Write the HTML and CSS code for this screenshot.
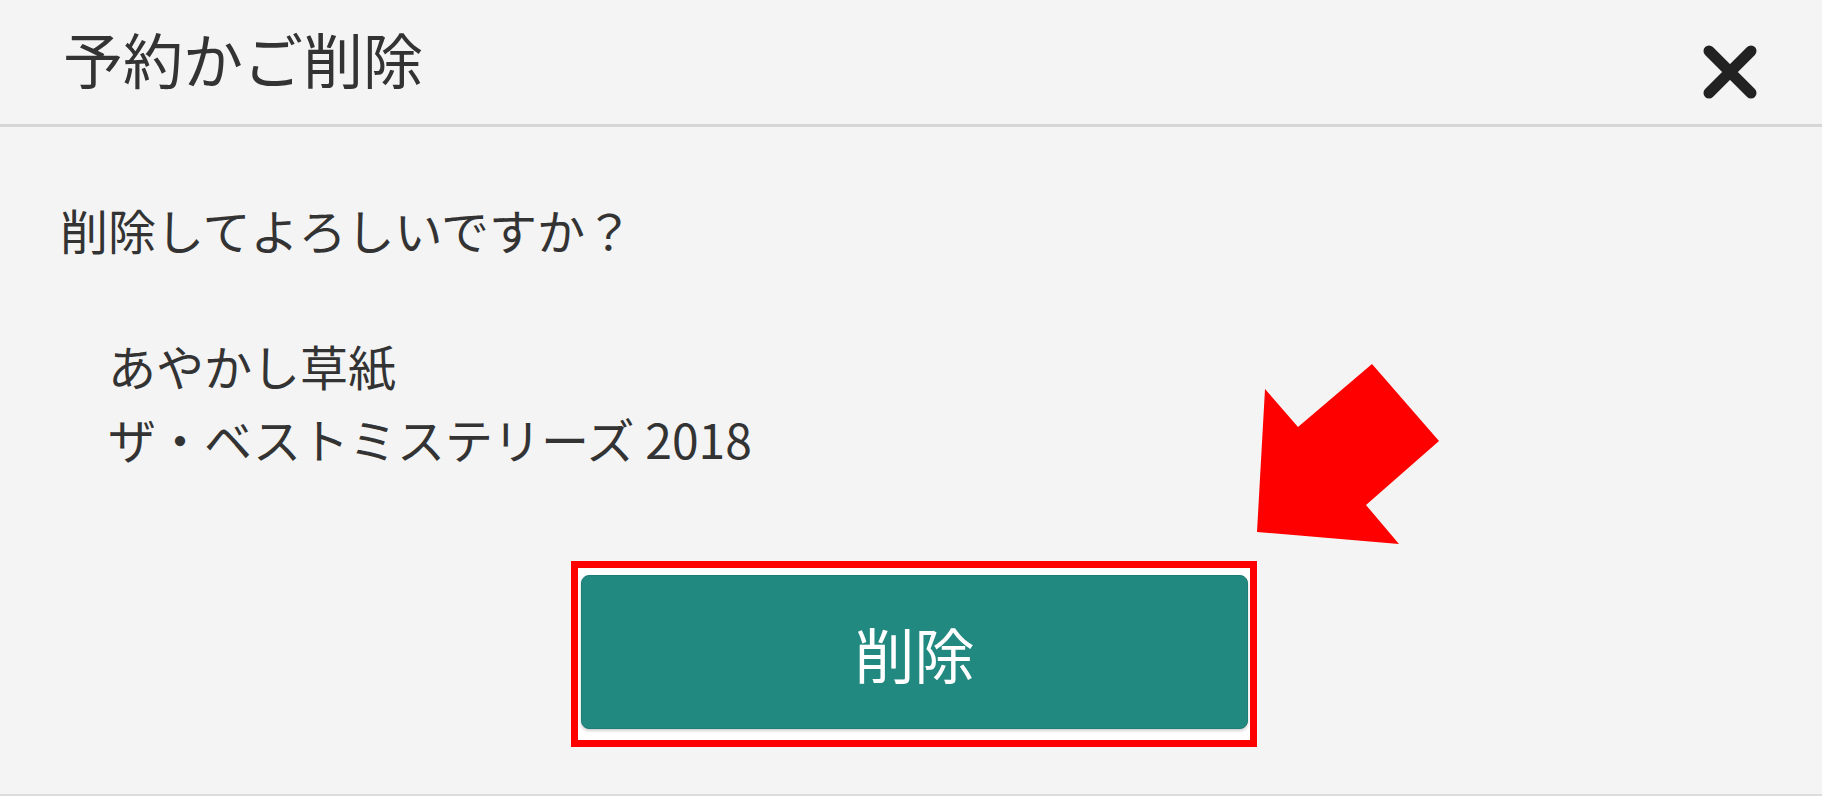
FILE: index.html
```html
<!DOCTYPE html>
<html lang="ja">
<head>
    <meta charset="UTF-8">
    <meta name="viewport" content="width=device-width, initial-scale=1.0">
    <title>予約かご削除</title>
    <link rel="stylesheet" href="styles.css">
</head>
<body>
    <div class="modal">
        <div class="modal-header">
            <h1 class="modal-title">予約かご削除</h1>
            <button type="button" class="btn-close" aria-label="閉じる">
                <svg width="54" height="54" viewBox="0 0 54 54">
                    <path d="M6 6 L48 48 M48 6 L6 48" stroke="#222" stroke-width="11" stroke-linecap="round" fill="none"/>
                </svg>
            </button>
        </div>
        <div class="modal-body">
            <p class="message">削除してよろしいですか？</p>
            <ul class="book-list">
                <li>あやかし草紙</li>
                <li>ザ・ベストミステリーズ 2018</li>
            </ul>
        </div>
        <div class="modal-footer">
            <div class="highlight">
                <button type="button" class="btn-delete">削除</button>
            </div>
        </div>
    </div>

    <svg class="arrow" width="200" height="190" viewBox="0 0 200 190">
        <polygon points="7,172 149,184 116,145 189,81 122,4 48,67 15,29" fill="#ff0000"/>
    </svg>
</body>
</html>
```

FILE: styles.css
```css
body {
    margin: 0;
    background-color: #f4f4f4;
    color: #333333;
    font-family: "Noto Sans CJK JP", "Noto Sans", sans-serif;
}
.modal {
    height: 794px;
    border-bottom: 2px solid #dddddd;
}
.modal-header {
    height: 124px;
    display: flex;
    align-items: center;
    justify-content: space-between;
    padding: 0 65px 0 63px;
    border-bottom: 3px solid #d6d6d6;
}
.modal-title {
    margin: 0 0 8px 0;
    font-size: 60px;
    font-weight: normal;
    line-height: 1;
}
.btn-close {
    background: none;
    border: none;
    padding: 0;
    margin-top: 20px;
    width: 54px;
    height: 54px;
    display: flex;
}
.modal-body {
    padding: 66px 0 0 60px;
}
.message {
    margin: 0;
    font-size: 48px;
    line-height: 72px;
}
.book-list {
    list-style: none;
    margin: 64px 0 0 0;
    padding: 0 0 0 48px;
    font-size: 48px;
    line-height: 73px;
}
.modal-footer {
    display: flex;
    justify-content: center;
    padding-top: 86px;
    padding-left: 6px;
}
.highlight {
    border: 7px solid #ff0000;
    background-color: #ffffff;
    padding: 7px 2px 11px 3px;
}
.btn-delete {
    display: block;
    width: 667px;
    height: 154px;
    background-color: #21897f;
    border: 1px solid #1c7d74;
    border-radius: 8px;
    color: #ffffff;
    font-family: inherit;
    font-size: 60px;
    box-shadow: 0 2px 3px rgba(0, 0, 0, 0.18);
}
.arrow {
    position: absolute;
    left: 1250px;
    top: 360px;
}
```
